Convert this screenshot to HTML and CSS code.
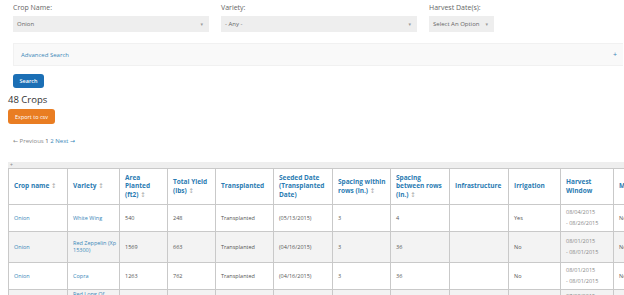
FILE: index.html
```html
<!DOCTYPE html>
<html lang="en">

<head>
    <meta charset="UTF-8">
    <meta name="viewport" content="width=device-width, initial-scale=1.0">
    <title>Crops</title>

    <link rel="stylesheet" href="styles.css">
</head>

<body>

    <form class="search-form">
        <div class="filters">
            <div class="filter">
                <label>Crop Name:</label>
                <div class="select wide">Onion</div>
            </div>
            <div class="filter">
                <label>Variety:</label>
                <div class="select wide">- Any -</div>
            </div>
            <div class="filter">
                <label>Harvest Date(s):</label>
                <div class="select narrow">Select An Option</div>
            </div>
        </div>

        <div class="advanced">
            <a href="#">Advanced Search</a>
            <span class="plus">+</span>
        </div>

        <button type="button" class="search-button">Search</button>
    </form>

    <div class="results">
        <h2>48 Crops</h2>
        <button type="button" class="export-button">Export to csv</button>

        <div class="pager">
            <span>&larr; Previous</span> <span class="current">1</span> <a href="#">2</a> <a href="#">Next &rarr;</a>
        </div>

        <div class="table-wrap">
            <div class="table-bar">+</div>
            <table class="crops">
                <colgroup>
                    <col style="width: 59px">
                    <col style="width: 52px">
                    <col style="width: 48px">
                    <col style="width: 48px">
                    <col style="width: 58px">
                    <col style="width: 59px">
                    <col style="width: 58px">
                    <col style="width: 59px">
                    <col style="width: 59px">
                    <col style="width: 52px">
                    <col style="width: 53px">
                    <col style="width: 60px">
                </colgroup>
                <thead>
                    <tr>
                        <th>Crop name <span class="sort">&#8597;</span></th>
                        <th>Variety <span class="sort">&#8597;</span></th>
                        <th>Area Planted (ft2) <span class="sort">&#8597;</span></th>
                        <th>Total Yield (lbs) <span class="sort">&#8597;</span></th>
                        <th>Transplanted</th>
                        <th>Seeded Date (Transplanted Date)</th>
                        <th>Spacing within rows (in.) <span class="sort">&#8597;</span></th>
                        <th>Spacing between rows (in.) <span class="sort">&#8597;</span></th>
                        <th>Infrastructure</th>
                        <th>Irrigation</th>
                        <th>Harvest Window</th>
                        <th>Mulch</th>
                    </tr>
                </thead>
                <tbody>
                    <tr class="r1">
                        <td><a href="#">Onion</a></td>
                        <td><a href="#">White Wing</a></td>
                        <td>540</td>
                        <td>248</td>
                        <td>Transplanted</td>
                        <td>(05/13/2015)</td>
                        <td>3</td>
                        <td>4</td>
                        <td></td>
                        <td>Yes</td>
                        <td class="window"><div>08/04/2015</div><div>- 08/26/2015</div></td>
                        <td>None</td>
                    </tr>
                    <tr class="r2 odd">
                        <td><a href="#">Onion</a></td>
                        <td><a href="#">Red Zeppelin (Xp 15300)</a></td>
                        <td>1569</td>
                        <td>663</td>
                        <td>Transplanted</td>
                        <td>(04/16/2015)</td>
                        <td>3</td>
                        <td>36</td>
                        <td></td>
                        <td>No</td>
                        <td class="window"><div>08/01/2015</div><div>- 08/01/2015</div></td>
                        <td>None</td>
                    </tr>
                    <tr class="r1">
                        <td><a href="#">Onion</a></td>
                        <td><a href="#">Copra</a></td>
                        <td>1263</td>
                        <td>762</td>
                        <td>Transplanted</td>
                        <td>(04/16/2015)</td>
                        <td>3</td>
                        <td>36</td>
                        <td></td>
                        <td>No</td>
                        <td class="window"><div>08/01/2015</div><div>- 08/01/2015</div></td>
                        <td>None</td>
                    </tr>
                    <tr class="r2 odd">
                        <td><a href="#">Onion</a></td>
                        <td class="top"><a href="#">Red Long Of Tropea</a></td>
                        <td>980</td>
                        <td>412</td>
                        <td>Transplanted</td>
                        <td>(04/16/2015)</td>
                        <td>3</td>
                        <td>36</td>
                        <td></td>
                        <td>No</td>
                        <td class="window top"><div>07/08/2015</div><div>- 07/29/2015</div></td>
                        <td>None</td>
                    </tr>
                </tbody>
            </table>
        </div>
    </div>

</body>

</html>
```

FILE: styles.css
```css
body {
    margin: 0;
    font-family: "Open Sans", "DejaVu Sans", sans-serif;
    color: #555;
    background-color: #fff;
    overflow: hidden;
}

a {
    color: #3a87b8;
    text-decoration: none;
}

.search-form {
    padding: 2px 1px 0 13px;
}

.filters {
    display: flex;
    gap: 12px;
}

.filter label {
    display: block;
    font-size: 7px;
    line-height: 11px;
    color: #666;
    margin-bottom: 3px;
}

/* fake select boxes, arrow drawn with ::after */
.select {
    position: relative;
    box-sizing: border-box;
    height: 16px;
    padding-left: 4px;
    background-color: #eee;
    font-size: 6px;
    line-height: 16px;
    color: #666;
}

.select.wide {
    width: 196px;
}

.select.narrow {
    width: 65px;
}

.select::after {
    content: "\25BE";
    position: absolute;
    right: 6px;
    top: 0;
    font-size: 5px;
    color: #999;
}

.advanced {
    display: flex;
    justify-content: space-between;
    align-items: center;
    height: 21px;
    margin-top: 11px;
    padding: 0 6px 0 7px;
    background-color: #f9f9f9;
    border: 1px solid #f1f1f1;
    border-right: none;
    font-size: 6px;
}

.advanced .plus {
    color: #3a87b8;
    font-size: 7px;
}

.search-button {
    display: block;
    margin-top: 8px;
    width: 31px;
    height: 14px;
    padding: 0;
    border: none;
    border-radius: 3px;
    background-color: #1b6fb5;
    color: #fff;
    font-family: inherit;
    font-size: 5.5px;
    font-weight: 600;
}

.results {
    padding-left: 8px;
}

.results h2 {
    margin: 5px 0 0;
    font-size: 9.5px;
    font-weight: 400;
    line-height: 14px;
    color: #333;
}

.export-button {
    display: block;
    margin-top: 2px;
    width: 47px;
    height: 15px;
    padding: 0;
    border: none;
    border-radius: 3px;
    background-color: #e97d22;
    color: #fff;
    font-family: inherit;
    font-size: 5.5px;
}

.pager {
    margin: 12px 0 0 5px;
    font-size: 6px;
    line-height: 10px;
    color: #888;
}

.pager .current {
    color: #555;
}

.table-wrap {
    margin-top: 16px;
}

.table-bar {
    width: 665px;
    height: 6px;
    background-color: #eee;
    font-size: 5px;
    line-height: 6px;
    padding-left: 2px;
    color: #888;
}

.crops {
    border-collapse: collapse;
    table-layout: fixed;
    width: 665px;
    font-size: 5.5px;
}

.crops th,
.crops td {
    border: 1px solid #c9c9c9;
    padding: 0 2px 0 5px;
    text-align: left;
    vertical-align: middle;
}

.crops th {
    height: 35px;
    font-size: 6.5px;
    font-weight: 700;
    line-height: 8.3px;
    color: #2a7bb2;
    background-color: #fff;
}

.crops .sort {
    font-weight: 400;
    color: #aaa;
}

.crops td {
    line-height: 7px;
}

.crops tr.r1 td {
    height: 26px;
}

.crops tr.r2 td {
    height: 30px;
}

.crops tr.odd td {
    background-color: #f3f3f3;
}

.crops td.window {
    line-height: 11px;
    color: #888;
}

.crops td.top {
    vertical-align: top;
    padding-top: 1px;
}
```
